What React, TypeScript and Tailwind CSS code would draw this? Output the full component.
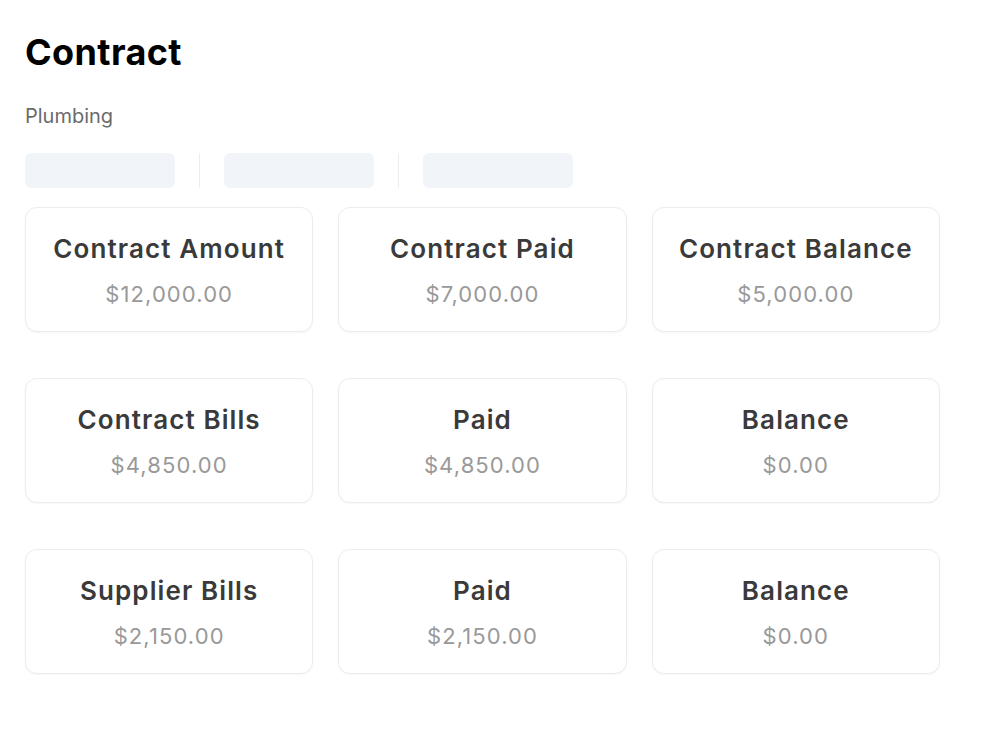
const rows = [
  [
    { label: "Contract Amount", value: "$12,000.00" },
    { label: "Contract Paid", value: "$7,000.00" },
    { label: "Contract Balance", value: "$5,000.00" },
  ],
  [
    { label: "Contract Bills", value: "$4,850.00" },
    { label: "Paid", value: "$4,850.00" },
    { label: "Balance", value: "$0.00" },
  ],
  [
    { label: "Supplier Bills", value: "$2,150.00" },
    { label: "Paid", value: "$2,150.00" },
    { label: "Balance", value: "$0.00" },
  ],
];

const StatCard: React.FC<{ label: string; value: string }> = ({ label, value }) => (
  <div className="h-[125px] rounded-xl border border-[#ececec] bg-white pt-[25px] shadow-[0_1px_2px_rgba(0,0,0,0.04)] flex flex-col items-center">
    <p className="text-[26px] leading-8 font-semibold text-[#3a3a3a] tracking-[1.1px]">{label}</p>
    <p className="mt-[15px] text-[22px] leading-7 text-[#999999] tracking-[1.1px]">{value}</p>
  </div>
);

export default function App() {
  return (
    <div className="min-h-screen bg-white px-[25px] pt-8 font-['Inter',sans-serif]">
      <h1 className="text-4xl leading-10 font-bold text-black tracking-[0.4px]">Contract</h1>
      <p className="mt-[30px] text-xl leading-7 text-[#6b6b6b]">Plumbing</p>
      <div className="mt-[23px] flex items-center gap-6">
        <div className="h-[35px] w-[150px] rounded-md bg-[#f1f5f9]" />
        <div className="h-[35px] w-px bg-[#ececec]" />
        <div className="h-[35px] w-[150px] rounded-md bg-[#f1f5f9]" />
        <div className="h-[35px] w-px bg-[#ececec]" />
        <div className="h-[35px] w-[150px] rounded-md bg-[#f1f5f9]" />
      </div>
      <div className="mt-[19px] flex w-[915px] flex-col gap-[46px]">
        {rows.map((row, i) => (
          <div key={i} className="grid grid-cols-3 gap-[25px]">
            {row.map((c) => (
              <StatCard key={c.label} label={c.label} value={c.value} />
            ))}
          </div>
        ))}
      </div>
    </div>
  );
}
